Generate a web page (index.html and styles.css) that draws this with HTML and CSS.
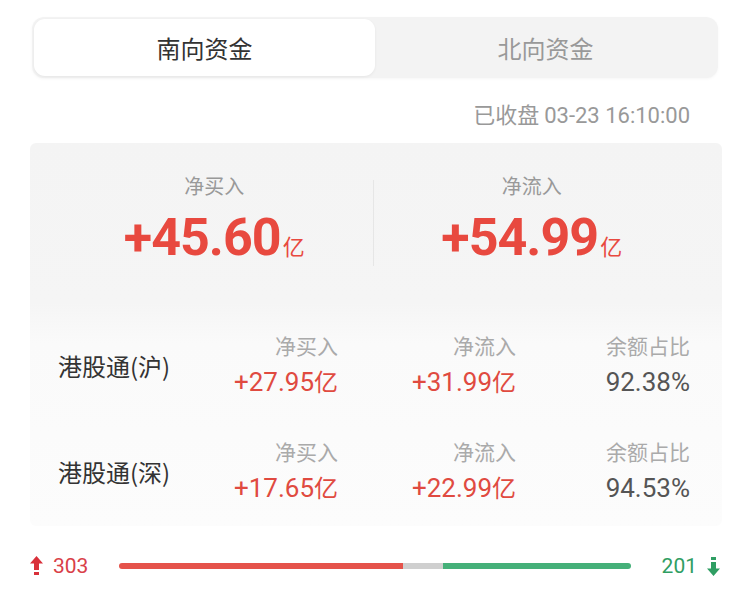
FILE: index.html
```html
<!DOCTYPE html>
<html>
<head>
    <meta charset="UTF-8">
    <title>南向资金</title>
    <link rel="stylesheet" href="styles.css">
</head>
<body>
    <div class="page">
        <div class="tabs">
            <div class="tab active">南向资金</div>
            <div class="tab">北向资金</div>
        </div>

        <div class="time">已收盘 <span class="num">03-23 16:10:00</span></div>

        <div class="card">
            <div class="summary">
                <div class="sum-col">
                    <div class="sum-label">净买入</div>
                    <div class="sum-value"><span class="num">+45.60</span><span class="unit">亿</span></div>
                </div>
                <div class="sum-col">
                    <div class="sum-label">净流入</div>
                    <div class="sum-value"><span class="num">+54.99</span><span class="unit">亿</span></div>
                </div>
            </div>

            <div class="rows">
                <div class="row">
                    <div class="name">港股通(沪)</div>
                    <div class="cell">
                        <div class="cell-label">净买入</div>
                        <div class="cell-value up"><span class="num">+27.95</span>亿</div>
                    </div>
                    <div class="cell">
                        <div class="cell-label">净流入</div>
                        <div class="cell-value up"><span class="num">+31.99</span>亿</div>
                    </div>
                    <div class="cell">
                        <div class="cell-label">余额占比</div>
                        <div class="cell-value"><span class="num">92.38%</span></div>
                    </div>
                </div>
                <div class="row">
                    <div class="name">港股通(深)</div>
                    <div class="cell">
                        <div class="cell-label">净买入</div>
                        <div class="cell-value up"><span class="num">+17.65</span>亿</div>
                    </div>
                    <div class="cell">
                        <div class="cell-label">净流入</div>
                        <div class="cell-value up"><span class="num">+22.99</span>亿</div>
                    </div>
                    <div class="cell">
                        <div class="cell-label">余额占比</div>
                        <div class="cell-value"><span class="num">94.53%</span></div>
                    </div>
                </div>
            </div>
        </div>

        <div class="breadth">
            <div class="count rise">
                <svg width="13" height="20" viewBox="0 0 13 20">
                    <path d="M6.5 0 L13 7.5 L9 7.5 L9 14 L4 14 L4 7.5 L0 7.5 Z" fill="#d9303a"/>
                    <rect x="4" y="16" width="5" height="3" fill="#d9303a"/>
                </svg>
                <span class="num">303</span>
            </div>
            <div class="track">
                <div class="seg red" style="width: 55.5%"></div>
                <div class="seg gray" style="width: 7.8%"></div>
                <div class="seg green" style="width: 36.7%"></div>
            </div>
            <div class="count fall">
                <span class="num">201</span>
                <svg width="13" height="20" viewBox="0 0 13 20">
                    <rect x="4" y="1" width="5" height="3" fill="#2f9e63"/>
                    <path d="M4 6 L9 6 L9 12.5 L13 12.5 L6.5 20 L0 12.5 L4 12.5 Z" fill="#2f9e63"/>
                </svg>
            </div>
        </div>
    </div>
</body>
</html>
```

FILE: styles.css
```css
body {
    margin: 0;
    background-color: #fff;
    font-family: "Noto Sans CJK SC", "Noto Sans", sans-serif;
    color: #333;
}

.num {
    font-family: Roboto, "Noto Sans", sans-serif;
}

.page {
    padding-top: 17px;
}

.tabs {
    display: flex;
    margin: 0 32px;
    height: 61px;
    padding: 2px;
    box-sizing: border-box;
    background-color: #f3f3f3;
    border-radius: 12px;
    box-shadow: 0 1px 3px rgba(0, 0, 0, 0.04);
}

.tab {
    flex: 1;
    display: flex;
    align-items: center;
    justify-content: center;
    font-size: 24px;
    color: #999;
    border-radius: 11px;
}

.tab.active {
    background-color: #fff;
    color: #333;
    box-shadow: 0 1px 3px rgba(0, 0, 0, 0.06);
}

.time {
    margin-top: 22px;
    padding-right: 60px;
    text-align: right;
    font-size: 22px;
    line-height: 26px;
    color: #999;
}

.card {
    margin: 14px 28px 0 30px;
    padding: 0 32px 0 26px;
    background: linear-gradient(#f4f4f4 0, #f5f5f5 160px, #fafafa 200px, #fcfcfc 100%);
    border-radius: 6px;
}

.summary {
    display: flex;
    padding-top: 31px;
    height: 138px;
    box-sizing: border-box;
}

.sum-col {
    flex: 1;
    text-align: center;
}

.sum-col + .sum-col {
    border-left: 1px solid #e6e6e6;
    height: 86px;
    margin-top: 6px;
}

.sum-col + .sum-col .sum-label {
    margin-top: -6px;
}

.sum-label {
    font-size: 20px;
    line-height: 24px;
    color: #999;
}

.sum-value {
    margin-top: 12px;
    line-height: 56px;
    color: #e8493f;
}

.sum-value .num {
    font-size: 52px;
    font-weight: bold;
    letter-spacing: -1px;
}

.unit {
    font-size: 22px;
    margin-left: 2px;
}

.rows {
    padding-top: 31px;
    padding-bottom: 2px;
}

.row {
    display: grid;
    grid-template-columns: 1fr 150px 178px 174px;
    align-items: center;
    height: 106px;
}

.name {
    padding-left: 2px;
    font-size: 24px;
    color: #333;
}

.cell {
    text-align: right;
}

.cell-label {
    font-size: 21px;
    line-height: 30px;
    color: #aaa;
}

.cell-value {
    margin-top: 3px;
    font-size: 24px;
    line-height: 36px;
    color: #555;
}

.cell-value .num {
    font-size: 26px;
}

.cell-value.up {
    color: #e04a40;
}

.breadth {
    display: flex;
    align-items: center;
    height: 40px;
    margin-top: 20px;
    padding: 0 30px;
}

.count {
    display: flex;
    align-items: center;
    gap: 10px;
    font-size: 21px;
}

.rise {
    color: #d94048;
}

.fall {
    color: #2f9e63;
}

.track {
    flex: 1;
    display: flex;
    height: 6px;
    margin: 0 31px;
    border-radius: 3px;
    overflow: hidden;
}

.seg.red {
    background-color: #e5534b;
}

.seg.gray {
    background-color: #cfcfcf;
}

.seg.green {
    background-color: #45b079;
}
```
